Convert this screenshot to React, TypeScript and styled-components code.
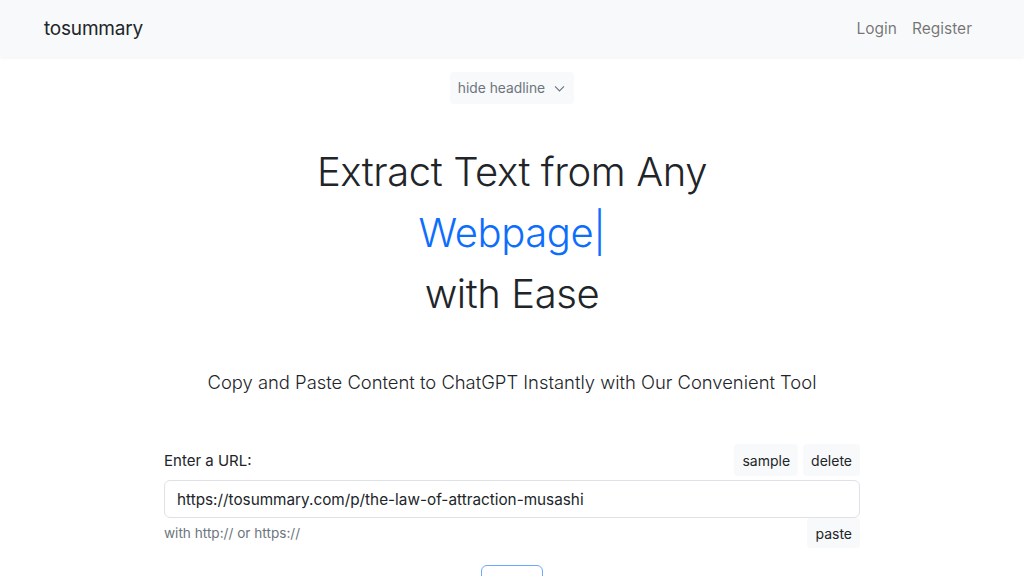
import React, { useState } from 'react';
import styled, { createGlobalStyle } from 'styled-components';

const GlobalStyle = createGlobalStyle`
  * { box-sizing: border-box; }
  body {
    margin: 0;
    font-family: Inter, "Noto Sans", sans-serif;
    color: #212529;
    background: #fff;
  }
`;

const Navbar = styled.nav`
  height: 57px;
  background-color: #f8f9fa;
  box-shadow: 0 1px 3px rgba(0, 0, 0, 0.06);
  display: flex;
  align-items: center;
  justify-content: space-between;
  padding: 0 44px;
`;

const Brand = styled.a`
  font-size: 19px;
  color: #212529;
  text-decoration: none;
  letter-spacing: -0.2px;
`;

const NavLinks = styled.div`
  display: flex;
  gap: 15px;
  margin-right: 8px;
`;

const NavLink = styled.a`
  font-size: 15.5px;
  color: rgba(0, 0, 0, 0.55);
  text-decoration: none;
`;

const Main = styled.main`
  display: flex;
  flex-direction: column;
  align-items: center;
`;

const ToggleButton = styled.button`
  margin-top: 15px;
  height: 32px;
  padding: 0 8px;
  border: none;
  border-radius: 4px;
  background-color: #f8f9fa;
  color: #6c757d;
  font-family: inherit;
  font-size: 13.8px;
  display: flex;
  align-items: center;
  gap: 8px;
  cursor: pointer;
`;

const Headline = styled.h1`
  margin: 37px 0 0;
  font-size: 40px;
  font-weight: 300;
  line-height: 61px;
  text-align: center;
  letter-spacing: -0.4px;
`;

const Typed = styled.span`
  color: #0d6efd;
`;

const Subtitle = styled.p`
  margin: 43px 0 0;
  font-size: 18.4px;
  font-weight: 300;
  line-height: 30px;
  text-align: center;
`;

const Form = styled.form`
  width: 696px;
  margin-top: 47px;
`;

const Row = styled.div`
  display: flex;
  align-items: center;
  justify-content: space-between;
`;

const Label = styled.label`
  font-size: 15px;
`;

const Actions = styled.div`
  display: flex;
  gap: 5px;
`;

const SmallButton = styled.button<{ $h?: number }>`
  height: ${(p) => p.$h ?? 32}px;
  padding: 0 8px;
  border: none;
  border-radius: 4px;
  background-color: #f8f9fa;
  color: #212529;
  font-family: inherit;
  font-size: 14px;
  cursor: pointer;
`;

const UrlInput = styled.input`
  display: block;
  width: 100%;
  height: 38px;
  margin-top: 4px;
  padding: 0 12px;
  border: 1px solid #dee2e6;
  border-radius: 6px;
  font-family: inherit;
  font-size: 15.3px;
  color: #212529;
  outline: none;
`;

const Help = styled.span`
  font-size: 13.6px;
  color: #6c757d;
`;

const SubmitRow = styled.div`
  display: flex;
  justify-content: center;
  margin-top: 17px;
`;

const SubmitButton = styled.button`
  width: 62px;
  height: 38px;
  border: 1px solid #6ea8fe;
  border-radius: 6px;
  background: #fff;
  color: #0d6efd;
  font-family: inherit;
  font-size: 16px;
`;

const Chevron = () => (
  <svg width="13" height="13" viewBox="0 0 16 16" fill="none" stroke="currentColor" strokeWidth="1.4">
    <path d="M2.5 5.5 8 11l5.5-5.5" />
  </svg>
);

export default function App() {
  const [url, setUrl] = useState('https://tosummary.com/p/the-law-of-attraction-musashi');

  return (
    <>
      <GlobalStyle />
      <Navbar>
        <Brand href="#">tosummary</Brand>
        <NavLinks>
          <NavLink href="#">Login</NavLink>
          <NavLink href="#">Register</NavLink>
        </NavLinks>
      </Navbar>
      <Main>
        <ToggleButton type="button">
          hide headline <Chevron />
        </ToggleButton>
        <Headline>
          Extract Text from Any
          <br />
          <Typed>Webpage|</Typed>
          <br />
          with Ease
        </Headline>
        <Subtitle>Copy and Paste Content to ChatGPT Instantly with Our Convenient Tool</Subtitle>
        <Form onSubmit={(e) => e.preventDefault()}>
          <Row>
            <Label htmlFor="url">Enter a URL:</Label>
            <Actions>
              <SmallButton type="button">sample</SmallButton>
              <SmallButton type="button" onClick={() => setUrl('')}>delete</SmallButton>
            </Actions>
          </Row>
          <UrlInput id="url" value={url} onChange={(e) => setUrl(e.target.value)} />
          <Row>
            <Help>with http:// or https://</Help>
            <SmallButton type="button" $h={30}>paste</SmallButton>
          </Row>
          <SubmitRow>
            <SubmitButton type="submit">Go</SubmitButton>
          </SubmitRow>
        </Form>
      </Main>
    </>
  );
}
